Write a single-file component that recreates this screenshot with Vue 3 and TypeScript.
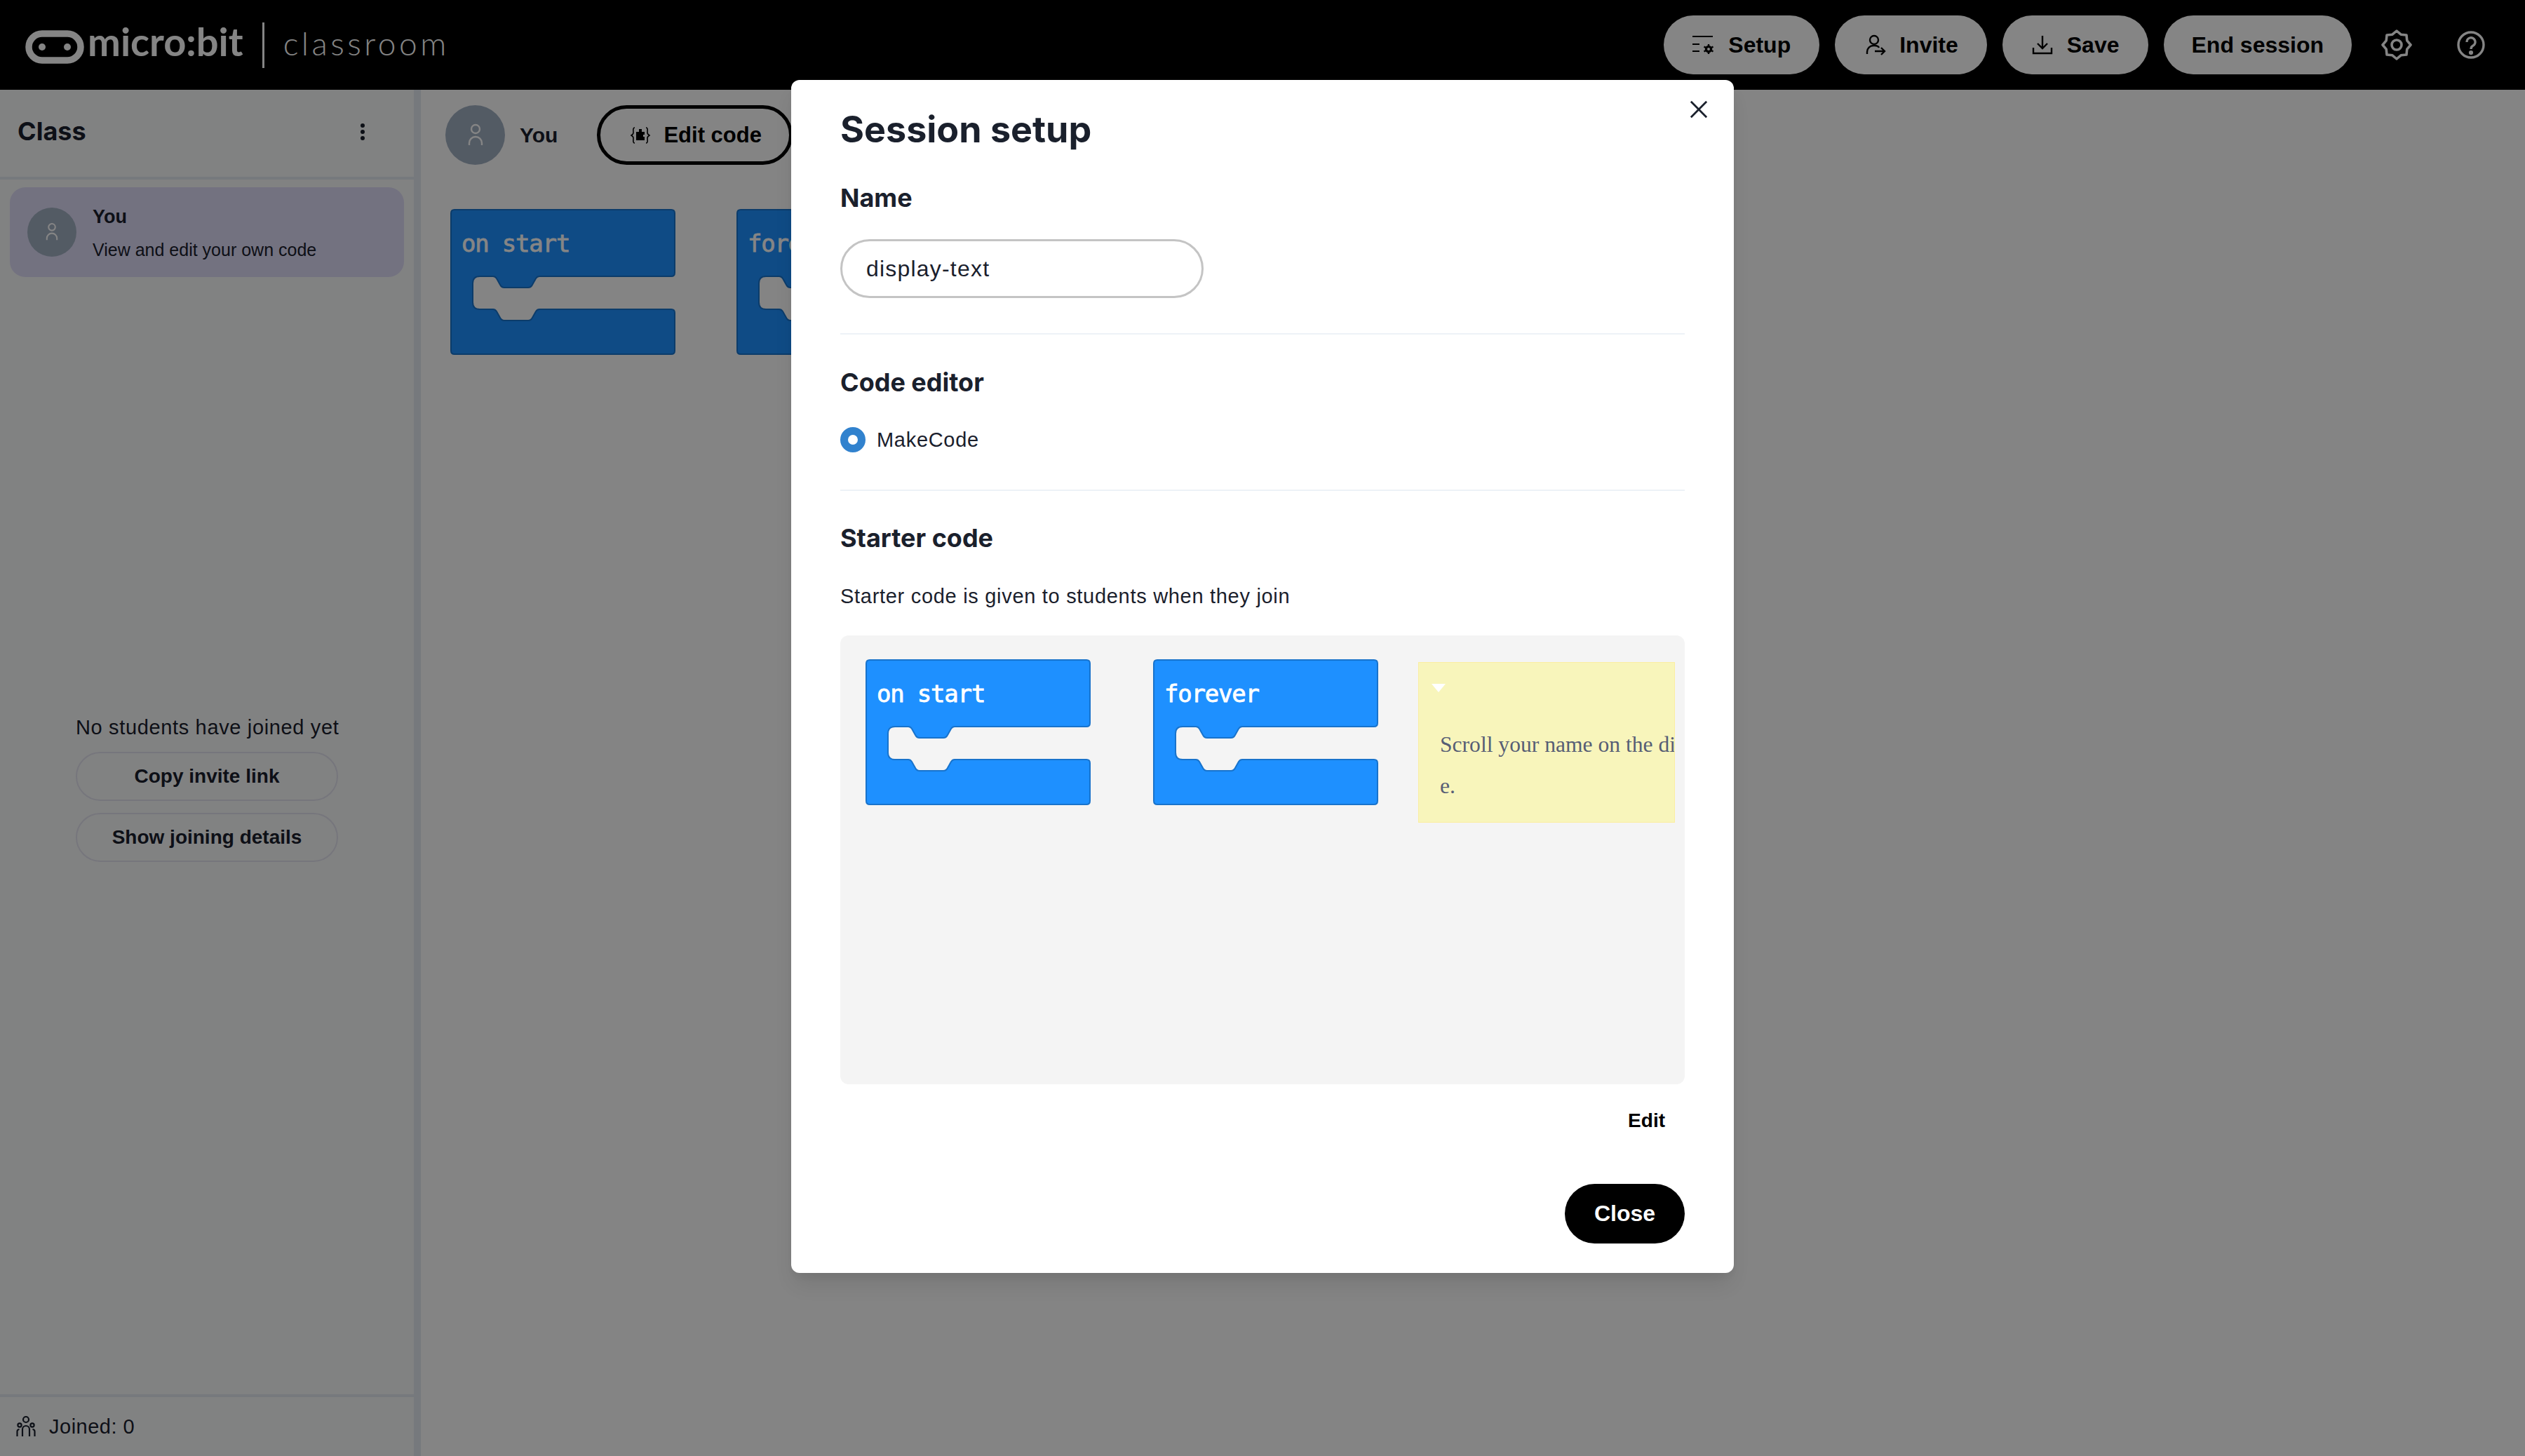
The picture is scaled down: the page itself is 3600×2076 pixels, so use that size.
<script setup lang="ts">
interface CanvasBlock {
  label: string;
  left: number;
  top: number;
}

const backgroundBlocks: CanvasBlock[] = [
  { label: 'on start', left: 42, top: 170 },
  { label: 'forever', left: 450, top: 170 },
];

const starterBlocks: CanvasBlock[] = [
  { label: 'on start', left: 36, top: 34 },
  { label: 'forever', left: 446, top: 34 },
];

// Same outline for both hat blocks, Blockly style
const blockPath =
  'M6,1 H315 Q320,1 320,6 V91 Q320,96 315,96 H127 Q124,96 122,99 L117,108 Q115,112 111,112 H77 Q73,112 71,108 L66,99 Q64,96 61,96 H42 Q32,96 32,106 V133 Q32,143 42,143 H61 Q64,143 66,146 L71,155 Q73,159 77,159 H111 Q115,159 117,155 L122,146 Q124,143 127,143 H315 Q320,143 320,148 V202 Q320,207 315,207 H6 Q1,207 1,202 V6 Q1,1 6,1 Z';
</script>

<template>
  <div class="page">
    <header class="topbar">
      <div class="brand">
        <svg class="brand-mark" viewBox="0 0 84 48" aria-hidden="true">
          <rect x="5" y="5" width="74" height="38" rx="19" fill="none" stroke="#fff" stroke-width="9.5" />
          <circle cx="24" cy="24" r="5" fill="#fff" />
          <circle cx="60" cy="24" r="5" fill="#fff" />
        </svg>
        <span class="brand-name">micro:bit</span>
        <span class="brand-rule"></span>
        <span class="brand-product">classroom</span>
      </div>
      <nav class="actions">
        <button class="action">
          <svg class="action-icon" viewBox="0 0 32 32" fill="none" stroke="#000" stroke-width="2.2" aria-hidden="true">
            <path d="M0 4h29M0 15h10M0 25h10" />
            <circle cx="23" cy="22" r="3.6" stroke-width="3.2" />
            <path d="M23 15v3M23 26v3M16.500 18.500l2.500 1.500M27 24l2.500 1.500M16.500 25.500l2.500-1.500M27 20l2.500-1.500" stroke-width="2.4" />
          </svg>
          Setup
        </button>
        <button class="action">
          <svg class="action-icon" viewBox="0 0 32 32" fill="none" stroke="#000" stroke-width="2.4" aria-hidden="true">
            <circle cx="15" cy="9" r="6" />
            <path d="M5 29v-3a9 9 0 0 1 9-9h2c3 0 5 1 6 3" />
            <path d="M16 25h13M25 20l5 5-5 5" />
          </svg>
          Invite
        </button>
        <button class="action">
          <svg class="action-icon" viewBox="0 0 32 32" fill="none" stroke="#000" stroke-width="2.4" aria-hidden="true">
            <path d="M16 3v18M9 14l7 7 7-7" />
            <path d="M3 20v8h26v-8" />
          </svg>
          Save
        </button>
        <button class="action action-text">End session</button>
        <button class="icon-button" aria-label="Settings">
          <svg viewBox="0 0 44 44" fill="none" stroke="#fff" stroke-width="3.6" stroke-linejoin="round" aria-hidden="true">
            <path d="M22 2L28.100 7.200L36 8L36.800 15.900L42 22L36.800 28.100L36 36L28.100 36.800L22 42L15.900 36.800L8 36L7.200 28.100L2 22L7.200 15.900L8 8L15.900 7.200Z" />
            <circle cx="22" cy="22" r="7" />
          </svg>
        </button>
        <button class="icon-button" aria-label="Help">
          <svg viewBox="0 0 44 44" fill="none" stroke="#fff" stroke-width="3.4" aria-hidden="true">
            <circle cx="22" cy="22" r="18" />
            <path d="M16 18a6 6 0 1 1 9 5c-2 1-3 2-3 5" />
            <circle cx="22" cy="33" r="1.400" fill="#fff" />
          </svg>
        </button>
      </nav>
    </header>

    <div class="workspace">
      <aside class="sidebar">
        <div class="sidebar-head">
          <h2 class="sidebar-title">Class</h2>
          <span class="kebab"><i></i><i></i><i></i></span>
        </div>
        <div class="sidebar-body">
          <div class="student-row">
            <span class="avatar avatar-small">
              <svg viewBox="0 0 32 40" fill="none" stroke="#fff" stroke-width="2.6" aria-hidden="true">
                <circle cx="16" cy="11" r="6" />
                <path d="M7 34v-3a9 9 0 0 1 18 0v3" />
              </svg>
            </span>
            <div class="student-text">
              <span class="student-name">You</span>
              <span class="student-note">View and edit your own code</span>
            </div>
          </div>
          <div class="empty">
            <p class="empty-text">No students have joined yet</p>
            <button class="outline-button">Copy invite link</button>
            <button class="outline-button">Show joining details</button>
          </div>
        </div>
        <div class="sidebar-foot">
          <svg class="joined-icon" viewBox="0 0 28 32" fill="none" stroke="#1a202c" stroke-width="2.2" aria-hidden="true">
            <circle cx="14" cy="6" r="4" />
            <circle cx="5" cy="14" r="2.600" />
            <circle cx="23" cy="14" r="2.600" />
            <path d="M9 30V20a5 5 0 0 1 10 0v10M1.500 30v-7a3 3 0 0 1 3-3M26.500 30v-7a3 3 0 0 0-3-3" />
          </svg>
          Joined: 0
        </div>
      </aside>

      <main class="main">
        <div class="main-head">
          <span class="avatar avatar-large">
            <svg viewBox="0 0 32 40" fill="none" stroke="#fff" stroke-width="2.4" aria-hidden="true">
              <circle cx="16" cy="11" r="6" />
              <path d="M7 34v-3a9 9 0 0 1 18 0v3" />
            </svg>
          </span>
          <span class="main-name">You</span>
          <button class="edit-code">
            <svg class="edit-code-icon" viewBox="0 0 28 24" fill="none" stroke="#000" stroke-width="1.6" aria-hidden="true">
              <path d="M6 1C3 1 4 5 4 8c0 2-1 3-3 4 2 1 3 2 3 4 0 3-1 7 2 7M22 1c3 0 2 4 2 7 0 2 1 3 3 4-2 1-3 2-3 4 0 3 1 7-2 7" />
              <path d="M8 7h4V3h4v4h4v4h-2v3h2v5H8z" fill="#000" stroke="none" />
            </svg>
            Edit code
          </button>
        </div>
        <div class="canvas">
          <svg
            v-for="block in backgroundBlocks"
            :key="block.label"
            class="block"
            :style="{ left: `${block.left}px`, top: `${block.top}px` }"
            width="321"
            height="208"
            viewBox="0 0 321 208"
          >
            <path :d="blockPath" fill="#1e90ff" stroke="#1873cc" stroke-width="2" />
            <text x="16" y="61" class="block-label">{{ block.label }}</text>
          </svg>
        </div>
      </main>
    </div>

    <div class="overlay"></div>

    <section class="modal">
      <button class="modal-close" aria-label="Close">
        <svg viewBox="0 0 28 28" fill="none" stroke="#1a202c" stroke-width="3" aria-hidden="true">
          <path d="M2 2l24 24M26 2L2 26" />
        </svg>
      </button>
      <h1 class="modal-title">Session setup</h1>

      <h3 class="label label-name">Name</h3>
      <div class="text-input">display-text</div>
      <div class="rule rule-first"></div>

      <h3 class="label label-editor">Code editor</h3>
      <div class="radio-row">
        <span class="radio"></span>
        MakeCode
      </div>
      <div class="rule rule-second"></div>

      <h3 class="label label-starter">Starter code</h3>
      <p class="description">Starter code is given to students when they join</p>

      <div class="preview">
        <svg
          v-for="block in starterBlocks"
          :key="block.label"
          class="block"
          :style="{ left: `${block.left}px`, top: `${block.top}px` }"
          width="321"
          height="208"
          viewBox="0 0 321 208"
        >
          <path :d="blockPath" fill="#1e90ff" stroke="#1873cc" stroke-width="2" />
          <text x="16" y="61" class="block-label">{{ block.label }}</text>
        </svg>
        <div class="note">
          <span class="note-toggle"></span>
          <p class="note-text">Scroll your name on the display<br />e.</p>
        </div>
      </div>

      <div class="edit-row">
        <button class="edit-link">Edit</button>
      </div>
      <div class="close-row">
        <button class="close-button">Close</button>
      </div>
    </section>
  </div>
</template>

<style scoped>
.page {
  position: relative;
  width: 3600px;
  height: 2076px;
  overflow: hidden;
  background: #fdfdfe;
  color: #1a202c;
  font-family: "Liberation Sans", Arial, sans-serif;
  font-size: 32px;
}

button {
  font-family: inherit;
  cursor: pointer;
}

h1,
h2,
h3,
p {
  margin: 0;
}

/* Top bar */
.topbar {
  height: 128px;
  background: #000;
  display: flex;
  align-items: center;
  justify-content: space-between;
  padding: 0 55px 0 36px;
  box-sizing: border-box;
}

.brand {
  display: flex;
  align-items: center;
  color: #fff;
  font-family: Lato, sans-serif;
}

.brand-mark {
  width: 84px;
  height: 48px;
  margin-top: 6px;
}

.brand-name {
  margin: 0 0 10px 5px;
  font-size: 56px;
  font-weight: 700;
  line-height: 70px;
}

.brand-rule {
  width: 3px;
  height: 65px;
  margin-left: 27px;
  background: #fff;
}

.brand-product {
  margin: 0 0 4px 27px;
  font-size: 46px;
  font-weight: 300;
  line-height: 60px;
  letter-spacing: 4.5px;
}

.actions {
  display: flex;
  align-items: center;
  gap: 22px;
}

.action {
  height: 84px;
  padding: 0 41px;
  border: 0;
  border-radius: 42px;
  background: #fff;
  color: #000;
  display: flex;
  align-items: center;
  gap: 19px;
  font-size: 32px;
  font-weight: 700;
}

.action-text {
  padding: 0 40px;
}

.action-icon {
  width: 32px;
  height: 32px;
}

.icon-button {
  width: 44px;
  height: 44px;
  padding: 0;
  border: 0;
  background: none;
  margin-left: 20px;
}

.icon-button + .icon-button {
  margin-left: 40px;
}

.icon-button svg {
  display: block;
  width: 44px;
  height: 44px;
}

/* Left column and main area */
.workspace {
  display: flex;
  height: 1948px;
}

.sidebar {
  width: 600px;
  box-sizing: border-box;
  background: #f8f9fa;
  border-right: 10px solid #e2e8f0;
  display: flex;
  flex-direction: column;
}

.sidebar-head {
  height: 128px;
  box-sizing: border-box;
  border-bottom: 4px solid #e2e8f0;
  display: flex;
  align-items: center;
  justify-content: space-between;
  padding: 0 70px 6px 25px;
}

.sidebar-title {
  font-family: Inter, sans-serif;
  font-size: 36px;
  font-weight: 700;
}

.kebab {
  display: flex;
  flex-direction: column;
  gap: 3px;
  margin-top: 2px;
}

.kebab i {
  width: 6px;
  height: 6px;
  border-radius: 50%;
  background: #1a202c;
}

.sidebar-body {
  flex: 1;
  display: flex;
  flex-direction: column;
  padding: 11px 14px 0;
}

.student-row {
  height: 128px;
  border-radius: 22px;
  background: #dddbf6;
  display: flex;
  align-items: center;
  gap: 23px;
  padding-left: 25px;
}

.avatar {
  border-radius: 50%;
  background: #a0aec0;
  display: flex;
  align-items: center;
  justify-content: center;
  flex-shrink: 0;
}

.avatar-small {
  width: 70px;
  height: 70px;
}

.avatar-small svg {
  width: 26px;
  height: 32px;
}

.avatar-large {
  width: 85px;
  height: 85px;
}

.avatar-large svg {
  width: 32px;
  height: 40px;
}

.student-text {
  display: flex;
  flex-direction: column;
  gap: 15px;
}

.student-name {
  font-size: 27px;
  line-height: 34px;
  font-weight: 700;
}

.student-note {
  font-size: 25px;
  line-height: 30px;
}

.empty {
  margin: 624px auto 0;
  width: 374px;
  display: flex;
  flex-direction: column;
  gap: 17px;
  align-items: stretch;
}

.empty-text {
  font-size: 29px;
  letter-spacing: 0.65px;
  line-height: 36px;
  text-align: center;
  white-space: nowrap;
}

.outline-button {
  height: 70px;
  border: 2px solid #e2e2ee;
  border-radius: 35px;
  background: none;
  color: #1a202c;
  font-size: 28px;
  font-weight: 700;
}

.sidebar-foot {
  height: 88px;
  box-sizing: border-box;
  border-top: 4px solid #e2e8f0;
  display: flex;
  align-items: center;
  gap: 19px;
  padding-left: 23px;
  font-size: 29px;
  letter-spacing: 0.5px;
}

.joined-icon {
  width: 28px;
  height: 32px;
}

.main {
  flex: 1;
  position: relative;
}

.main-head {
  display: flex;
  align-items: center;
  padding: 22px 0 0 35px;
}

.main-name {
  margin-left: 21px;
  font-size: 30px;
  font-weight: 700;
}

.edit-code {
  margin-left: 56px;
  width: 279px;
  height: 85px;
  padding: 0 0 0 43px;
  border: 5px solid #000;
  border-radius: 43px;
  background: none;
  color: #000;
  display: flex;
  align-items: center;
  gap: 19px;
  font-size: 31px;
  font-weight: 700;
}

.edit-code-icon {
  width: 28px;
  height: 24px;
}

.canvas {
  position: absolute;
  inset: 0;
  pointer-events: none;
}

.block {
  position: absolute;
}

.block-label {
  font-family: "DejaVu Sans Mono", monospace;
  font-size: 34px;
  letter-spacing: -1.2px;
  fill: #fff;
  stroke: #fff;
  stroke-width: 0.8px;
}

/* Dialog */
.overlay {
  position: absolute;
  inset: 0;
  background: rgba(0, 0, 0, 0.48);
}

.modal {
  position: absolute;
  left: 1128px;
  top: 114px;
  width: 1344px;
  box-sizing: border-box;
  padding: 35px 70px 42px;
  background: #fff;
  border-radius: 12px;
  box-shadow: 0 20px 30px -6px rgba(0, 0, 0, 0.1), 0 8px 12px -4px rgba(0, 0, 0, 0.05);
}

.modal-close {
  position: absolute;
  top: 29px;
  right: 37px;
  width: 26px;
  height: 26px;
  padding: 0;
  border: 0;
  background: none;
}

.modal-close svg {
  display: block;
  width: 26px;
  height: 26px;
}

.modal-title {
  font-family: Inter, sans-serif;
  font-size: 52px;
  font-weight: 700;
  line-height: 72px;
}

.label {
  font-family: Inter, sans-serif;
  font-size: 36px;
  font-weight: 700;
  line-height: 40px;
}

.label-name {
  margin-top: 41px;
}

.label-editor {
  margin-top: 48px;
}

.label-starter {
  margin-top: 47px;
}

.text-input {
  width: 518px;
  height: 84px;
  margin-top: 39px;
  box-sizing: border-box;
  border: 3px solid #c4c4c4;
  border-radius: 42px;
  padding-left: 34px;
  display: flex;
  align-items: center;
  letter-spacing: 1.2px;
  color: #1a202c;
}

.rule {
  height: 2px;
  background: #edf2f7;
}

.rule-first {
  margin-top: 50px;
}

.rule-second {
  margin-top: 51px;
}

.radio-row {
  height: 40px;
  margin-top: 42px;
  display: flex;
  align-items: center;
  gap: 16px;
  font-size: 29px;
  letter-spacing: 0.7px;
}

.radio {
  width: 36px;
  height: 36px;
  box-sizing: border-box;
  border-radius: 50%;
  border: 11px solid #3182ce;
  background: #fff;
}

.description {
  margin-top: 43px;
  font-size: 29px;
  letter-spacing: 0.7px;
  line-height: 40px;
}

.preview {
  position: relative;
  height: 640px;
  margin-top: 36px;
  border-radius: 12px;
  background: #f4f4f4;
  overflow: hidden;
}

.note {
  position: absolute;
  left: 824px;
  top: 38px;
  width: 366px;
  height: 229px;
  box-sizing: border-box;
  border: 1px solid #fbeea0;
  background: #f8f5bb;
  overflow: hidden;
}

.note-toggle {
  position: absolute;
  left: 18px;
  top: 30px;
  width: 0;
  height: 0;
  border-left: 10px solid transparent;
  border-right: 10px solid transparent;
  border-top: 12px solid #fff;
}

.note-text {
  position: absolute;
  left: 30px;
  top: 87px;
  width: 600px;
  font-family: "Liberation Serif", serif;
  font-size: 31.6px;
  line-height: 59px;
  color: #575e75;
}

.edit-row {
  margin-top: 32px;
  display: flex;
  justify-content: flex-end;
}

.edit-link {
  height: 40px;
  padding: 0 28px;
  border: 0;
  background: none;
  color: #000;
  font-size: 28px;
  font-weight: 700;
}

.close-row {
  margin-top: 70px;
  display: flex;
  justify-content: flex-end;
}

.close-button {
  width: 171px;
  height: 85px;
  border: 0;
  border-radius: 43px;
  background: #000;
  color: #fff;
  font-size: 32px;
  font-weight: 700;
}
</style>
